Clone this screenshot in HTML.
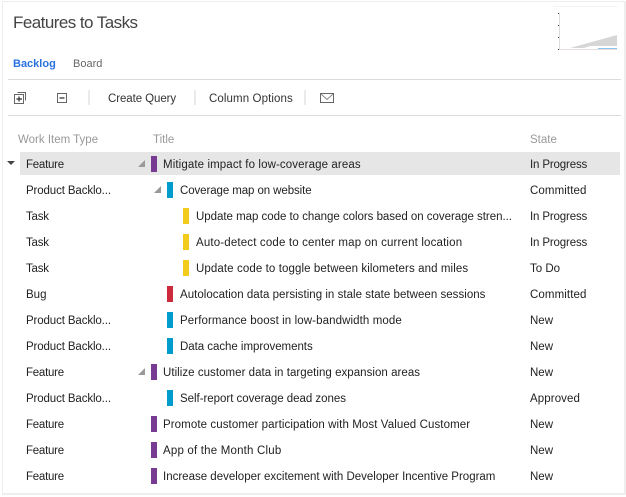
<!DOCTYPE html>
<html><head><meta charset="utf-8"><style>
html,body{margin:0;padding:0;background:#fff}
body{width:626px;height:497px;position:relative;overflow:hidden;font-family:"Liberation Sans",sans-serif;font-size:11.5px;color:#222}
.a{position:absolute;white-space:nowrap}
.l{position:absolute;background:#dcdcdc}
.b{position:absolute;width:6px;height:16px}
.t{position:absolute;line-height:18px;white-space:nowrap}
.tri{position:absolute;width:7px;height:7px}
.f{letter-spacing:-.25px}.p{letter-spacing:-.12px}.g{letter-spacing:-.15px}
</style></head><body>
<div class="a" style="left:2px;top:1px;width:621px;height:491px;border:1px solid #eee;border-width:1px 2px 2px 1px"></div>
<div class="a" style="left:13px;top:11px;font-size:17px;letter-spacing:-.55px;line-height:24px;color:#444">Features to Tasks</div>
<div class="a" style="left:13px;top:56px;font-size:11px;font-weight:bold;color:#2a72e0;line-height:16px">Backlog</div>
<div class="a" style="left:73px;top:56px;font-size:11px;color:#666;line-height:16px">Board</div>
<div class="l" style="left:8px;top:79px;width:613px;height:1px"></div>
<div class="l" style="left:8px;top:115px;width:613px;height:1px"></div>
<div class="l" style="left:88px;top:90px;width:2px;height:15px;background:#eaeaea"></div>
<div class="l" style="left:194px;top:90px;width:2px;height:15px;background:#eaeaea"></div>
<div class="l" style="left:304px;top:90px;width:2px;height:15px;background:#eaeaea"></div>
<svg class="a" style="left:0;top:85px" width="80" height="25" fill="none" stroke="#666">
<path d="M17.5 7.5H25.5V15.5"/><rect x="14.5" y="9.5" width="9" height="9" stroke-width="1"/><path d="M16.5 14H22M19 11.5V16.5" stroke="#444" stroke-width="1.4"/>
<rect x="57.5" y="8.5" width="9" height="9"/><path d="M59.5 13H64.5" stroke="#444" stroke-width="1.4"/></svg>
<div class="a" style="left:108px;top:91px;line-height:16px;letter-spacing:-.08px;color:#333">Create Query</div>
<div class="a" style="left:209px;top:91px;line-height:16px;letter-spacing:.1px;color:#333">Column Options</div>
<svg class="a" style="left:300px;top:85px" width="50" height="25" fill="none" stroke="#666"><rect x="20.5" y="8.5" width="13" height="9"/><path d="M21 9L27 14.5L33 9" stroke="#888"/></svg>
<svg class="a" style="left:550px;top:0" width="70" height="55">
<rect x="3" y="6" width="64" height="1" fill="#f3f3f3"/>
<rect x="9" y="13" width="1" height="37" fill="#ddd"/>
<rect x="9" y="49" width="58" height="1" fill="#e6dede"/>
<rect x="8" y="13" width="1" height="1" fill="#444"/><rect x="8" y="25" width="1" height="1" fill="#444"/><rect x="8" y="37" width="1" height="1" fill="#444"/><rect x="8" y="49" width="1" height="1" fill="#444"/>
<path d="M20 48L67 35V46L40 46L34 48Z" fill="#d6d6d6"/>
<rect x="48" y="48" width="19" height="1" fill="#8cc4f0"/>
</svg>
<div class="a" style="left:18px;top:132px;line-height:16px;color:#999">Work Item Type</div>
<div class="a" style="left:153px;top:132px;line-height:16px;color:#999">Title</div>
<div class="a" style="left:530px;top:132px;line-height:16px;color:#999">State</div>
<div class="a" style="left:20px;top:152px;width:600px;height:23px;background:#e6e6e6"></div>
<svg class="a" style="left:7px;top:161px" width="9" height="5"><path d="M0 0H8L4 4Z" fill="#444"/></svg>
<svg class="tri" style="left:138px;top:160px"><path d="M7 0V7H0Z" fill="#999"/></svg>
<svg class="tri" style="left:154px;top:186px"><path d="M7 0V7H0Z" fill="#999"/></svg>
<svg class="tri" style="left:138px;top:368px"><path d="M7 0V7H0Z" fill="#999"/></svg>

<div class="t f" style="left:26px;top:156px">Feature</div><div class="b" style="left:151px;top:156px;background:#773b93"></div><div class="t" style="left:163px;top:156px;letter-spacing:.11px">Mitigate impact fo low-coverage areas</div><div class="t g" style="left:530px;top:156px">In Progress</div>
<div class="t p" style="left:26px;top:182px">Product Backlo...</div><div class="b" style="left:167px;top:182px;background:#009ccc"></div><div class="t" style="left:180px;top:182px;letter-spacing:-.09px">Coverage map on website</div><div class="t" style="left:530px;top:182px;letter-spacing:.1px">Committed</div>
<div class="t f" style="left:26px;top:208px;letter-spacing:-.2px">Task</div><div class="b" style="left:183px;top:208px;background:#f2cb1d"></div><div class="t" style="left:196px;top:208px;letter-spacing:-.03px">Update map code to change colors based on coverage stren...</div><div class="t g" style="left:530px;top:208px">In Progress</div>
<div class="t f" style="left:26px;top:234px;letter-spacing:-.2px">Task</div><div class="b" style="left:183px;top:234px;background:#f2cb1d"></div><div class="t" style="left:196px;top:234px;letter-spacing:.16px">Auto-detect code to center map on current location</div><div class="t g" style="left:530px;top:234px">In Progress</div>
<div class="t f" style="left:26px;top:260px;letter-spacing:-.2px">Task</div><div class="b" style="left:183px;top:260px;background:#f2cb1d"></div><div class="t" style="left:196px;top:260px;letter-spacing:.1px">Update code to toggle between kilometers and miles</div><div class="t" style="left:530px;top:260px">To Do</div>
<div class="t" style="left:26px;top:286px">Bug</div><div class="b" style="left:167px;top:286px;background:#cc293d"></div><div class="t" style="left:180px;top:286px;letter-spacing:.03px">Autolocation data persisting in stale state between sessions</div><div class="t" style="left:530px;top:286px;letter-spacing:.1px">Committed</div>
<div class="t p" style="left:26px;top:312px">Product Backlo...</div><div class="b" style="left:167px;top:312px;background:#009ccc"></div><div class="t" style="left:180px;top:312px;letter-spacing:.1px">Performance boost in low-bandwidth mode</div><div class="t" style="left:530px;top:312px">New</div>
<div class="t p" style="left:26px;top:338px">Product Backlo...</div><div class="b" style="left:167px;top:338px;background:#009ccc"></div><div class="t" style="left:180px;top:338px;letter-spacing:-.04px">Data cache improvements</div><div class="t" style="left:530px;top:338px">New</div>
<div class="t f" style="left:26px;top:364px">Feature</div><div class="b" style="left:151px;top:364px;background:#773b93"></div><div class="t" style="left:163px;top:364px;letter-spacing:.04px">Utilize customer data in targeting expansion areas</div><div class="t" style="left:530px;top:364px">New</div>
<div class="t p" style="left:26px;top:390px">Product Backlo...</div><div class="b" style="left:167px;top:390px;background:#009ccc"></div><div class="t" style="left:180px;top:390px;letter-spacing:-.03px">Self-report coverage dead zones</div><div class="t" style="left:530px;top:390px;letter-spacing:.1px">Approved</div>
<div class="t f" style="left:26px;top:416px">Feature</div><div class="b" style="left:151px;top:416px;background:#773b93"></div><div class="t" style="left:163px;top:416px;letter-spacing:.09px">Promote customer participation with Most Valued Customer</div><div class="t" style="left:530px;top:416px">New</div>
<div class="t f" style="left:26px;top:442px">Feature</div><div class="b" style="left:151px;top:442px;background:#773b93"></div><div class="t" style="left:163px;top:442px;letter-spacing:.19px">App of the Month Club</div><div class="t" style="left:530px;top:442px">New</div>
<div class="t f" style="left:26px;top:468px">Feature</div><div class="b" style="left:151px;top:468px;background:#773b93"></div><div class="t" style="left:163px;top:468px">Increase developer excitement with Developer Incentive Program</div><div class="t" style="left:530px;top:468px">New</div>
</body></html>
